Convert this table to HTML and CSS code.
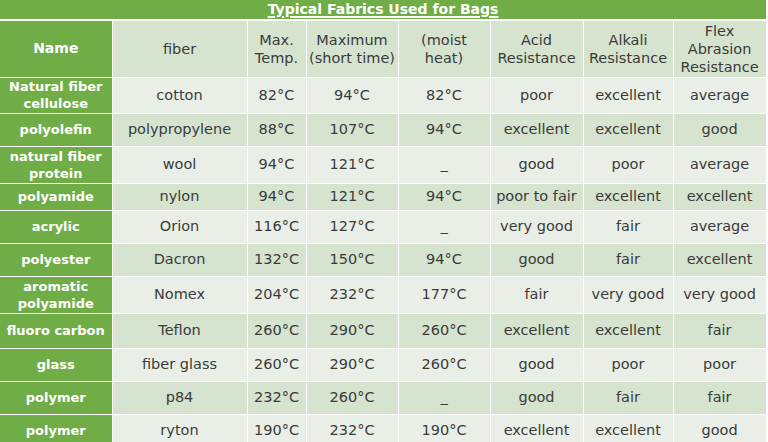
FILE: index.html
```html
<!DOCTYPE html>
<html>
<head>
<meta charset="utf-8">
<link rel="stylesheet" href="styles.css">
</head>
<body>
<table class="fabrics">
  <colgroup>
    <col class="c-name"><col class="c-fiber"><col class="c-max"><col class="c-short"><col class="c-moist"><col class="c-acid"><col class="c-alkali"><col class="c-flex">
  </colgroup>
  <thead>
    <tr class="title-row"><th colspan="8" class="title">Typical Fabrics Used for Bags</th></tr>
    <tr class="head-row">
      <th class="name">Name</th>
      <th>fiber</th>
      <th>Max.<br>Temp.</th>
      <th>Maximum<br>(short time)</th>
      <th>(moist<br>heat)</th>
      <th>Acid<br>Resistance</th>
      <th>Alkali<br>Resistance</th>
      <th>Flex<br>Abrasion<br>Resistance</th>
    </tr>
  </thead>
  <tbody>
    <tr class="r1 light"><th class="name">Natural fiber<br>cellulose</th><td>cotton</td><td>82°C</td><td>94°C</td><td>82°C</td><td>poor</td><td>excellent</td><td>average</td></tr>
    <tr class="r2 dark"><th class="name">polyolefin</th><td>polypropylene</td><td>88°C</td><td>107°C</td><td>94°C</td><td>excellent</td><td>excellent</td><td>good</td></tr>
    <tr class="r3 light"><th class="name">natural fiber<br>protein</th><td>wool</td><td>94°C</td><td>121°C</td><td>_</td><td>good</td><td>poor</td><td>average</td></tr>
    <tr class="r4 dark"><th class="name">polyamide</th><td>nylon</td><td>94°C</td><td>121°C</td><td>94°C</td><td>poor to fair</td><td>excellent</td><td>excellent</td></tr>
    <tr class="r5 light"><th class="name">acrylic</th><td>Orion</td><td>116°C</td><td>127°C</td><td>_</td><td>very good</td><td>fair</td><td>average</td></tr>
    <tr class="r6 dark"><th class="name">polyester</th><td>Dacron</td><td>132°C</td><td>150°C</td><td>94°C</td><td>good</td><td>fair</td><td>excellent</td></tr>
    <tr class="r7 light"><th class="name">aromatic<br>polyamide</th><td>Nomex</td><td>204°C</td><td>232°C</td><td>177°C</td><td>fair</td><td>very good</td><td>very good</td></tr>
    <tr class="r8 dark"><th class="name">fluoro carbon</th><td>Teflon</td><td>260°C</td><td>290°C</td><td>260°C</td><td>excellent</td><td>excellent</td><td>fair</td></tr>
    <tr class="r9 light"><th class="name">glass</th><td>fiber glass</td><td>260°C</td><td>290°C</td><td>260°C</td><td>good</td><td>poor</td><td>poor</td></tr>
    <tr class="r10 dark"><th class="name">polymer</th><td>p84</td><td>232°C</td><td>260°C</td><td>_</td><td>good</td><td>fair</td><td>fair</td></tr>
    <tr class="r11 light"><th class="name">polymer</th><td>ryton</td><td>190°C</td><td>232°C</td><td>190°C</td><td>excellent</td><td>excellent</td><td>good</td></tr>
  </tbody>
</table>
</body>
</html>
```

FILE: styles.css
```css
html, body {
  margin: 0;
  padding: 0;
  background: #ffffff;
}

.fabrics {
  border-collapse: collapse;
  table-layout: fixed;
  width: 766px;
  font-family: "DejaVu Sans", "Liberation Sans", sans-serif;
  font-size: 14.5px;
  line-height: 17px;
  color: #3b3b3b;
}

.c-name { width: 112px; }
.c-fiber { width: 135px; }
.c-max { width: 59px; }
.c-short { width: 92px; }
.c-moist { width: 92px; }
.c-acid { width: 93px; }
.c-alkali { width: 90px; }
.c-flex { width: 93px; }

.fabrics th,
.fabrics td {
  border: 1px solid #ffffff;
  padding: 0 2px;
  text-align: center;
  vertical-align: middle;
  font-weight: normal;
  white-space: nowrap;
}

.fabrics .title {
  background: #70ad47;
  color: #ffffff;
  font-weight: bold;
  font-size: 14px;
  line-height: 17px;
  text-decoration: underline;
  text-decoration-thickness: 2px;
  text-underline-offset: 2px;
  border-top: none;
  border-left: none;
  border-right: none;
  border-bottom: 2px solid #ffffff;
}

.fabrics .name {
  background: #70ad47;
  color: #ffffff;
  font-weight: bold;
  font-size: 13px;
  line-height: 17px;
  border-left: none;
}

.head-row th { background: #d5e3cf; line-height: 18px; }
.head-row .name { font-size: 14px; }

.light td { background: #e9efe7; }
.dark td { background: #d5e3cf; }

.title-row { height: 20px; }
.head-row { height: 57px; }
.r1 { height: 36px; }
.r2 { height: 33px; }
.r3 { height: 37px; }
.r4 { height: 27px; }
.r5 { height: 33px; }
.r6 { height: 33px; }
.r7 { height: 37px; }
.r8 { height: 35px; }
.r9 { height: 33px; }
.r10 { height: 33px; }
.r11 { height: 33px; }
```
